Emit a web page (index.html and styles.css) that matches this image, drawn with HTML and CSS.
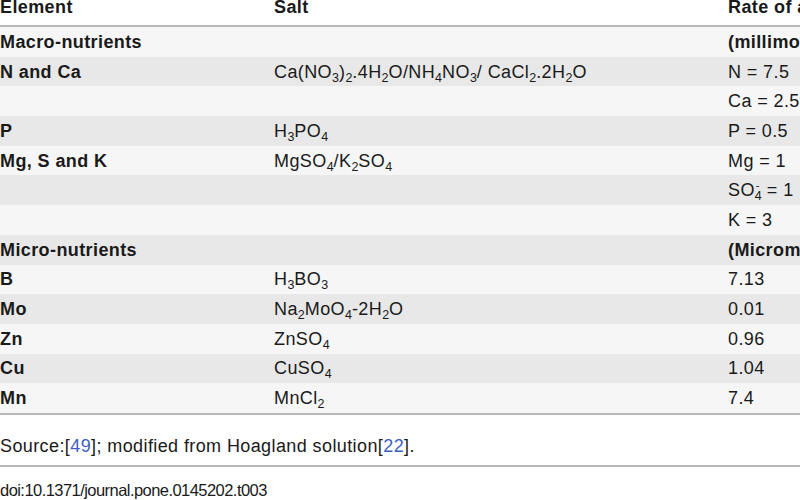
FILE: index.html
```html
<!DOCTYPE html>
<html>
<head>
<meta charset="utf-8">
<link rel="stylesheet" href="styles.css">
</head>
<body>
<div class="page">
  <div class="row head">
    <div class="c1">Element</div>
    <div class="c2">Salt</div>
    <div class="c3">Rate of application</div>
  </div>
  <div class="row light">
    <div class="c1 b">Macro-nutrients</div>
    <div class="c2"></div>
    <div class="c3 b">(millimolar)</div>
  </div>
  <div class="row gray">
    <div class="c1 b">N and Ca</div>
    <div class="c2">Ca(NO<sub>3</sub>)<sub>2</sub>.4H<sub>2</sub>O/NH<sub>4</sub>NO<sub>3</sub>/ CaCl<sub>2</sub>.2H<sub>2</sub>O</div>
    <div class="c3">N = 7.5</div>
  </div>
  <div class="row light">
    <div class="c1 b"></div>
    <div class="c2"></div>
    <div class="c3">Ca = 2.5</div>
  </div>
  <div class="row gray">
    <div class="c1 b">P</div>
    <div class="c2">H<sub>3</sub>PO<sub>4</sub></div>
    <div class="c3">P = 0.5</div>
  </div>
  <div class="row light">
    <div class="c1 b">Mg, S and K</div>
    <div class="c2">MgSO<sub>4</sub>/K<sub>2</sub>SO<sub>4</sub></div>
    <div class="c3">Mg = 1</div>
  </div>
  <div class="row gray">
    <div class="c1 b"></div>
    <div class="c2"></div>
    <div class="c3">SO<sub>4</sub><sup class="neg">-</sup> = 1</div>
  </div>
  <div class="row light">
    <div class="c1 b"></div>
    <div class="c2"></div>
    <div class="c3">K = 3</div>
  </div>
  <div class="row gray">
    <div class="c1 b">Micro-nutrients</div>
    <div class="c2"></div>
    <div class="c3 b">(Micromolar)</div>
  </div>
  <div class="row light">
    <div class="c1 b">B</div>
    <div class="c2">H<sub>3</sub>BO<sub>3</sub></div>
    <div class="c3">7.13</div>
  </div>
  <div class="row gray">
    <div class="c1 b">Mo</div>
    <div class="c2">Na<sub>2</sub>MoO<sub>4</sub>-2H<sub>2</sub>O</div>
    <div class="c3">0.01</div>
  </div>
  <div class="row light">
    <div class="c1 b">Zn</div>
    <div class="c2">ZnSO<sub>4</sub></div>
    <div class="c3">0.96</div>
  </div>
  <div class="row gray">
    <div class="c1 b">Cu</div>
    <div class="c2">CuSO<sub>4</sub></div>
    <div class="c3">1.04</div>
  </div>
  <div class="row light last">
    <div class="c1 b">Mn</div>
    <div class="c2">MnCl<sub>2</sub></div>
    <div class="c3">7.4</div>
  </div>
  <div class="note">Source:[<a class="ref">49</a>]; modified from Hoagland solution[<a class="ref">22</a>].</div>
  <div class="doi">doi:10.1371/journal.pone.0145202.t003</div>
</div>
</body>
</html>
```

FILE: styles.css
```css
html, body {
  margin: 0;
  padding: 0;
  background: #ffffff;
  overflow: hidden;
}
.page {
  width: 1000px;
  height: 500px;
  font-family: "Liberation Sans", Arial, sans-serif;
  font-size: 18px;
  letter-spacing: 0.4px;
  color: #1a1a1a;
  overflow: hidden;
}
.row {
  display: grid;
  grid-template-columns: 274px 454px 272px;
  height: 29.7px;
  align-items: center;
  line-height: 20px;
  white-space: nowrap;
}
.row.head {
  height: 25px;
  align-items: start;
  line-height: 14px;
  font-weight: bold;
  border-bottom: 2px solid #b9b9b9;
  background: #ffffff;
}
.row.light { background: #f6f6f6; }
.row.gray { background: #e7e8e7; }
.row.last { border-bottom: 2px solid #b9b9b9; }
.b { font-weight: bold; }
sub, sup {
  font-size: 12.5px;
  line-height: 0;
  letter-spacing: 0;
}
sub { vertical-align: -4px; }
sup.neg {
  vertical-align: 7px;
  margin-left: -6px;
  margin-right: 2px;
  font-size: 11px;
}
.note {
  height: 50px;
  line-height: 62px;
  border-bottom: 2px solid #b9b9b9;
  white-space: nowrap;
}
.ref { color: #3d5fc4; }
.doi {
  font-size: 16.5px;
  letter-spacing: -0.55px;
  line-height: 46px;
  white-space: nowrap;
}
```
